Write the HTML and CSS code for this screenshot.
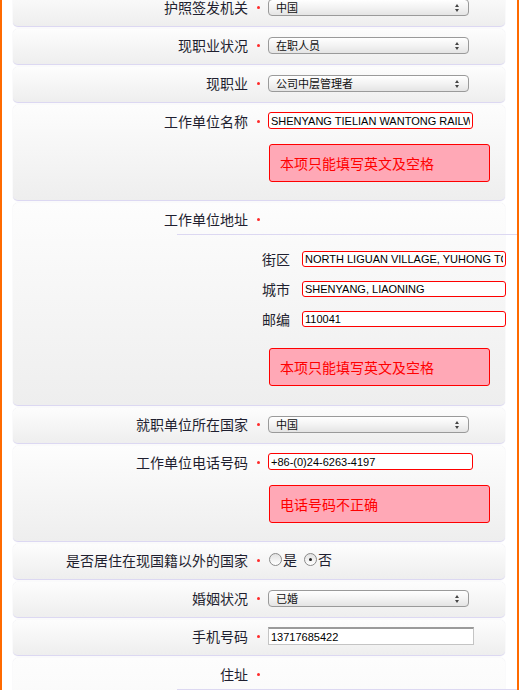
FILE: index.html
```html
<!DOCTYPE html>
<html lang="zh">
<head>
<meta charset="utf-8">
<title>工作信息</title>
<link rel="stylesheet" href="styles.css">
</head>
<body>
<div class="page">
  <div class="list">
    <div class="card">
      <div class="row">
        <div class="label">护照签发机关</div><div class="req"><span class="dot"></span></div>
        <div class="field"><div class="select">中国<span class="arrows"></span></div></div>
      </div>
    </div>
    <div class="card">
      <div class="row">
        <div class="label">现职业状况</div><div class="req"><span class="dot"></span></div>
        <div class="field"><div class="select">在职人员<span class="arrows"></span></div></div>
      </div>
    </div>
    <div class="card">
      <div class="row">
        <div class="label">现职业</div><div class="req"><span class="dot"></span></div>
        <div class="field"><div class="select">公司中层管理者<span class="arrows"></span></div></div>
      </div>
    </div>
    <div class="card tall">
      <div class="row">
        <div class="label">工作单位名称</div><div class="req"><span class="dot"></span></div>
        <div class="field">
          <input class="text err" type="text" value="SHENYANG TIELIAN WANTONG RAILWAY CO., LTD">
          <div class="error">本项只能填写英文及空格</div>
        </div>
      </div>
    </div>
    <div class="card addr">
      <div class="row">
        <div class="label">工作单位地址</div><div class="req"><span class="dot"></span></div>
        <div class="field"></div>
      </div>
      <div class="sub">
        <div class="subrows">
          <div class="sublabel">街区</div><input class="text err wide" type="text" value="NORTH LIGUAN VILLAGE, YUHONG TOWN">
          <div class="sublabel">城市</div><input class="text err wide" type="text" value="SHENYANG, LIAONING">
          <div class="sublabel">邮编</div><input class="text err wide" type="text" value="110041">
        </div>
        <div class="error suberr">本项只能填写英文及空格</div>
      </div>
    </div>
    <div class="card">
      <div class="row">
        <div class="label">就职单位所在国家</div><div class="req"><span class="dot"></span></div>
        <div class="field"><div class="select">中国<span class="arrows"></span></div></div>
      </div>
    </div>
    <div class="card tall">
      <div class="row">
        <div class="label">工作单位电话号码</div><div class="req"><span class="dot"></span></div>
        <div class="field">
          <input class="text err" type="text" value="+86-(0)24-6263-4197">
          <div class="error">电话号码不正确</div>
        </div>
      </div>
    </div>
    <div class="card">
      <div class="row">
        <div class="label">是否居住在现国籍以外的国家</div><div class="req"><span class="dot"></span></div>
        <div class="field radios">
          <span class="radio"></span><span class="rtext">是</span>
          <span class="radio on"></span><span class="rtext">否</span>
        </div>
      </div>
    </div>
    <div class="card">
      <div class="row">
        <div class="label">婚姻状况</div><div class="req"><span class="dot"></span></div>
        <div class="field"><div class="select">已婚<span class="arrows"></span></div></div>
      </div>
    </div>
    <div class="card">
      <div class="row">
        <div class="label">手机号码</div><div class="req"><span class="dot"></span></div>
        <div class="field"><input class="text plain" type="text" value="13717685422"></div>
      </div>
    </div>
    <div class="card addr">
      <div class="row">
        <div class="label">住址</div><div class="req"><span class="dot"></span></div>
        <div class="field"></div>
      </div>
      <div class="sub"></div>
    </div>
  </div>
</div>
</body>
</html>
```
FILE: styles.css
```css
* { box-sizing: border-box; }
html, body { margin: 0; padding: 0; background: #fff; }
body {
  font-family: "Liberation Sans", "Noto Sans CJK SC", sans-serif;
  color: #222;
}
.page {
  width: 519px;
  height: 690px;
  overflow: hidden;
  border-left: 2px solid #ff6a00;
  border-right: 2px solid #ff6a00;
  padding: 0 12px 0 11px;
}
.list {
  margin-top: -9px;
  display: flex;
  flex-direction: column;
  gap: 2px;
}
.card {
  min-height: 36px;
  border-radius: 5px;
  background: linear-gradient(#fdfdfd, #eeeeee);
  border-bottom: 1px solid #dcd8f2;
  box-shadow: 0 0 1px rgba(190, 190, 205, 0.7);
}
.card.tall { height: 96px; }
.card.addr { height: 203px; }
.row {
  display: grid;
  grid-template-columns: 235px 20px 1fr;
  align-items: start;
}
.label {
  font-family: "Noto Sans CJK SC", sans-serif;
  font-size: 14px;
  line-height: 20px;
  padding-top: 6px;
  text-align: right;
  color: #1f1f30;
  white-space: nowrap;
}
.req {
  height: 32px;
  display: flex;
  align-items: center;
  justify-content: center;
}
.dot {
  width: 3px;
  height: 3px;
  border-radius: 50%;
  background: #ff2a2a;
  margin-left: 1px;
}
.field { padding-top: 8px; }
.select {
  position: relative;
  width: 201px;
  height: 17px;
  border: 1px solid #9a9a9a;
  border-radius: 4px;
  background: linear-gradient(#ffffff, #f3f3f3 50%, #e4e4e4);
  font-family: "Noto Sans CJK SC", sans-serif;
  font-size: 11px;
  line-height: 15px;
  padding-left: 7px;
  color: #111;
}
.arrows {
  position: absolute;
  right: 8px;
  top: 4px;
  width: 5px;
  height: 8px;
}
.arrows::before, .arrows::after {
  content: "";
  position: absolute;
  left: 0;
  border-left: 2.5px solid transparent;
  border-right: 2.5px solid transparent;
}
.arrows::before { top: 0; border-bottom: 3px solid #444; }
.arrows::after { bottom: 0; border-top: 3px solid #444; }
.text {
  display: block;
  width: 205px;
  height: 17px;
  margin: 0;
  padding: 0 2px;
  font-family: "Liberation Sans", sans-serif;
  font-size: 11px;
  color: #000;
  background: #fff;
  outline: none;
}
.text.err {
  margin-top: -1px;
  border: 1px solid #f00;
  border-radius: 3px;
}
.text.plain {
  width: 206px;
  height: 18px;
  margin-top: -1px;
  border: 1px solid #c4c4c4;
  border-top: 2px solid #9a9a9a;
  border-radius: 0;
}
.error {
  margin: 15px 0 0 1px;
  width: 221px;
  height: 38px;
  background: #ffa8b6;
  border: 1px solid #f00;
  border-radius: 3px;
  color: #f00;
  font-family: "Noto Sans CJK SC", sans-serif;
  font-size: 14px;
  line-height: 36px;
  padding-left: 10px;
}
.sub {
  margin: -1px -12px 0 164px;
  border-top: 1px solid #dcd8f2;
  padding-top: 16px;
}
.subrows {
  display: grid;
  grid-template-columns: 113px 204px;
  column-gap: 12px;
  row-gap: 14px;
  align-items: center;
}
.sublabel {
  font-family: "Noto Sans CJK SC", sans-serif;
  font-size: 14px;
  line-height: 16px;
  text-align: right;
  color: #1f1f30;
}
.text.wide { width: 204px; height: 16px; margin: 0; }
.suberr { margin: 21px 0 0 92px; }
.radios {
  display: flex;
  align-items: center;
  padding-top: 5px;
  padding-left: 1px;
  font-family: "Noto Sans CJK SC", sans-serif;
  font-size: 14px;
  line-height: 20px;
  color: #1f1f30;
}
.radio {
  width: 13px;
  height: 13px;
  border-radius: 50%;
  border: 1px solid #8a8a8a;
  background: linear-gradient(#e2e2e2, #ffffff);
  position: relative;
  margin-right: 1px;
}
.radio.on::after {
  content: "";
  position: absolute;
  left: 4px;
  top: 4px;
  width: 3px;
  height: 3px;
  border-radius: 50%;
  background: #222;
}
.rtext { margin-right: 7px; }
```
